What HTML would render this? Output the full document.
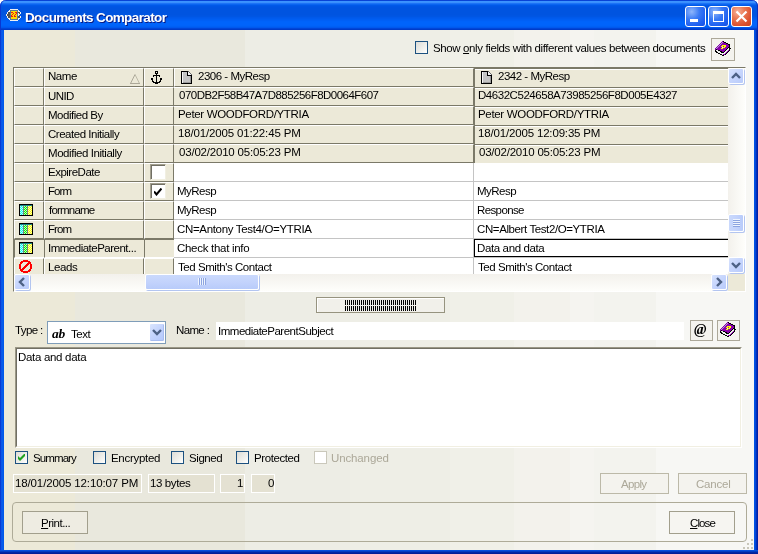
<!DOCTYPE html><html><head><meta charset="utf-8"><style>
html,body{margin:0;padding:0}
body{width:758px;height:554px;position:relative;overflow:hidden;background:#fff;font-family:"Liberation Sans",sans-serif;font-size:11px;color:#000}
div{box-sizing:border-box}
</style></head><body>
<div style="position:absolute;left:0;top:0;width:758px;height:30px;border-radius:6px 6px 0 0;box-shadow:inset 1px 0 0 #0a36d0,inset -1px 0 0 #0a30c0;background:linear-gradient(to bottom,#0843d6 0px,#0843d6 1px,#3b93ff 1px,#3b93ff 2px,#3a8ffc 2px,#3a8ffc 3px,#1c73f6 3px,#1c73f6 4px,#0a64f0 4px,#0a64f0 5px,#0059e8 5px,#0059e8 6px,#0055e4 6px,#0055e4 7px,#0054e2 7px,#0054e2 8px,#0054e0 8px,#0054e0 9px,#0054e0 9px,#0054e0 10px,#0054e0 10px,#0054e0 11px,#0054e0 11px,#0054e0 12px,#0054e0 12px,#0054e0 13px,#0054e0 13px,#0054e0 14px,#0054e0 14px,#0054e0 15px,#0055e2 15px,#0055e2 16px,#0056e4 16px,#0056e4 17px,#0059ea 17px,#0059ea 18px,#005bee 18px,#005bee 19px,#005ef2 19px,#005ef2 20px,#0060f6 20px,#0060f6 21px,#0063fa 21px,#0063fa 22px,#0064fb 22px,#0064fb 23px,#0064fb 23px,#0064fb 24px,#0064fb 24px,#0064fb 25px,#0063fa 25px,#0063fa 26px,#0060f4 26px,#0060f4 27px,#0058ee 27px,#0058ee 28px,#0046d8 28px,#0046d8 29px,#003bc8 29px,#003bc8 30px)"></div>
<div style="position:absolute;left:0;top:30px;width:4px;height:524px;background:linear-gradient(to right,#0526c8 0px,#0a4fe0 1px,#0a5ded 2px,#0058ea 3px)"></div>
<div style="position:absolute;left:754px;top:30px;width:4px;height:524px;background:linear-gradient(to right,#0055e8 0px,#0050e0 1px,#0440d0 2px,#0021a8 3px)"></div>
<div style="position:absolute;left:0;top:550px;width:758px;height:4px;background:linear-gradient(to bottom,#0756e4 0px,#0148d4 1px,#0030b0 2px,#001e98 3px)"></div>
<div style="position:absolute;left:4px;top:30px;width:750px;height:520px;background:linear-gradient(to right,#ece9d8 0px,#ece9d8 71px,#e9e8dd 71px,#e9e8dd 241px,#edede5 241px,#edede5 346px,#eeeee6 346px,#eeeee6 446px,#f0f0e8 446px,#f0f0e8 510px,#f3f2ec 510px,#f3f2ec 566px,#f5f4f0 566px,#f5f4f0 590px,#f3f3ee 590px,#f3f3ee 652px,#f7f7f4 652px,#f7f7f4 750px)"></div>
<svg style="position:absolute;left:6px;top:9px;" width="15" height="12" shape-rendering="crispEdges"><rect x="4" y="0" width="8" height="1" fill="#f0f0f0"/><rect x="3" y="1" width="1" height="1" fill="#f0f0f0"/><rect x="4" y="1" width="8" height="1" fill="#5a7890"/><rect x="12" y="1" width="1" height="1" fill="#f0f0f0"/><rect x="2" y="2" width="2" height="1" fill="#f0f0f0"/><rect x="4" y="2" width="1" height="1" fill="#5a7890"/><rect x="5" y="2" width="6" height="1" fill="#ffd800"/><rect x="11" y="2" width="1" height="1" fill="#5a7890"/><rect x="12" y="2" width="2" height="1" fill="#f0f0f0"/><rect x="1" y="3" width="1" height="1" fill="#f0f0f0"/><rect x="2" y="3" width="2" height="1" fill="#505050"/><rect x="4" y="3" width="1" height="1" fill="#5a7890"/><rect x="5" y="3" width="2" height="1" fill="#e81818"/><rect x="7" y="3" width="2" height="1" fill="#ffd800"/><rect x="9" y="3" width="2" height="1" fill="#e81818"/><rect x="11" y="3" width="1" height="1" fill="#5a7890"/><rect x="12" y="3" width="2" height="1" fill="#505050"/><rect x="14" y="3" width="1" height="1" fill="#f0f0f0"/><rect x="1" y="4" width="1" height="1" fill="#f0f0f0"/><rect x="2" y="4" width="2" height="1" fill="#505050"/><rect x="4" y="4" width="1" height="1" fill="#5a7890"/><rect x="5" y="4" width="2" height="1" fill="#ffd800"/><rect x="7" y="4" width="1" height="1" fill="#e81818"/><rect x="8" y="4" width="2" height="1" fill="#ffd800"/><rect x="10" y="4" width="1" height="1" fill="#e81818"/><rect x="11" y="4" width="1" height="1" fill="#5a7890"/><rect x="12" y="4" width="1" height="1" fill="#f0f0f0"/><rect x="13" y="4" width="1" height="1" fill="#505050"/><rect x="14" y="4" width="1" height="1" fill="#f0f0f0"/><rect x="0" y="5" width="1" height="1" fill="#f0f0f0"/><rect x="1" y="5" width="3" height="1" fill="#505050"/><rect x="4" y="5" width="1" height="1" fill="#5a7890"/><rect x="5" y="5" width="1" height="1" fill="#ffd800"/><rect x="6" y="5" width="1" height="1" fill="#e81818"/><rect x="7" y="5" width="2" height="1" fill="#ffd800"/><rect x="9" y="5" width="1" height="1" fill="#e81818"/><rect x="10" y="5" width="1" height="1" fill="#ffd800"/><rect x="11" y="5" width="1" height="1" fill="#5a7890"/><rect x="12" y="5" width="2" height="1" fill="#f0f0f0"/><rect x="0" y="6" width="1" height="1" fill="#f0f0f0"/><rect x="1" y="6" width="3" height="1" fill="#505050"/><rect x="4" y="6" width="1" height="1" fill="#5a7890"/><rect x="5" y="6" width="1" height="1" fill="#e81818"/><rect x="6" y="6" width="2" height="1" fill="#ffd800"/><rect x="8" y="6" width="1" height="1" fill="#e81818"/><rect x="9" y="6" width="2" height="1" fill="#ffd800"/><rect x="11" y="6" width="1" height="1" fill="#5a7890"/><rect x="12" y="6" width="1" height="1" fill="#f0f0f0"/><rect x="1" y="7" width="1" height="1" fill="#f0f0f0"/><rect x="2" y="7" width="2" height="1" fill="#505050"/><rect x="4" y="7" width="1" height="1" fill="#5a7890"/><rect x="5" y="7" width="2" height="1" fill="#e81818"/><rect x="7" y="7" width="1" height="1" fill="#ffd800"/><rect x="8" y="7" width="2" height="1" fill="#e81818"/><rect x="10" y="7" width="1" height="1" fill="#ffd800"/><rect x="11" y="7" width="1" height="1" fill="#5a7890"/><rect x="12" y="7" width="2" height="1" fill="#505050"/><rect x="14" y="7" width="1" height="1" fill="#f0f0f0"/><rect x="1" y="8" width="1" height="1" fill="#f0f0f0"/><rect x="2" y="8" width="2" height="1" fill="#505050"/><rect x="4" y="8" width="1" height="1" fill="#5a7890"/><rect x="5" y="8" width="6" height="1" fill="#ffd800"/><rect x="11" y="8" width="1" height="1" fill="#5a7890"/><rect x="12" y="8" width="2" height="1" fill="#505050"/><rect x="14" y="8" width="1" height="1" fill="#f0f0f0"/><rect x="2" y="9" width="2" height="1" fill="#f0f0f0"/><rect x="4" y="9" width="1" height="1" fill="#5a7890"/><rect x="5" y="9" width="6" height="1" fill="#ffd800"/><rect x="11" y="9" width="1" height="1" fill="#5a7890"/><rect x="12" y="9" width="2" height="1" fill="#f0f0f0"/><rect x="3" y="10" width="1" height="1" fill="#f0f0f0"/><rect x="4" y="10" width="8" height="1" fill="#5a7890"/><rect x="12" y="10" width="1" height="1" fill="#f0f0f0"/><rect x="4" y="11" width="8" height="1" fill="#f0f0f0"/></svg>
<div style="position:absolute;left:25.20px;top:10px;line-height:16px;font-size:13.5px;letter-spacing:-0.626px;white-space:nowrap;will-change:transform;font-weight:bold;color:#fff;text-shadow:1px 1px 0 #0a1a80">Documents Comparator</div>
<div style="position:absolute;left:685px;top:6px;width:21px;height:21px;border:1px solid #fff;border-radius:3px;background:radial-gradient(circle at 30% 25%,#8fb6fb 0%,#3a7af5 40%,#1d5ef0 75%,#1650e0 100%)"></div>
<div style="position:absolute;left:708px;top:6px;width:21px;height:21px;border:1px solid #fff;border-radius:3px;background:radial-gradient(circle at 30% 25%,#8fb6fb 0%,#3a7af5 40%,#1d5ef0 75%,#1650e0 100%)"></div>
<div style="position:absolute;left:731px;top:6px;width:21px;height:21px;border:1px solid #fff;border-radius:3px;background:radial-gradient(circle at 30% 25%,#f7b29a 0%,#ea7a55 35%,#dd5230 70%,#c8441f 100%)"></div>
<div style="position:absolute;left:690px;top:19px;width:8px;height:3px;background:#fff"></div>
<div style="position:absolute;left:713px;top:11px;width:11px;height:11px;border:1px solid #fff;border-top-width:3px"></div>
<svg style="position:absolute;left:735px;top:10px" width="13" height="13" viewBox="0 0 13 13"><path d="M1.5 1.5L11.5 11.5M11.5 1.5L1.5 11.5" stroke="#fff" stroke-width="2.2"/></svg>
<div style="position:absolute;left:415px;top:41px;width:13px;height:13px;border:1px solid #1c5180;background:linear-gradient(135deg,#dcdcd7 0%,#f0f0ec 60%,#ffffff 100%)"></div>
<div style="position:absolute;left:432.70px;top:42px;line-height:13px;font-size:11.5px;letter-spacing:-0.385px;white-space:nowrap;will-change:transform;;">Show <u>o</u>nly fields with different values between documents</div>
<div style="position:absolute;left:711px;top:38px;width:24px;height:23px;border:1px solid #aca899;background:#f4f3ee"></div>
<svg style="position:absolute;left:715px;top:41px;" width="16" height="15" shape-rendering="crispEdges"><rect x="7" y="0" width="1" height="1" fill="#8a00aa"/><rect x="8" y="0" width="1" height="1" fill="#000"/><rect x="6" y="1" width="1" height="1" fill="#8a00aa"/><rect x="7" y="1" width="1" height="1" fill="#b0a0d8"/><rect x="8" y="1" width="1" height="1" fill="#8a00aa"/><rect x="9" y="1" width="2" height="1" fill="#000"/><rect x="5" y="2" width="1" height="1" fill="#8a00aa"/><rect x="6" y="2" width="1" height="1" fill="#b0a0d8"/><rect x="7" y="2" width="4" height="1" fill="#8a00aa"/><rect x="11" y="2" width="2" height="1" fill="#000"/><rect x="4" y="3" width="1" height="1" fill="#8a00aa"/><rect x="5" y="3" width="1" height="1" fill="#b0a0d8"/><rect x="6" y="3" width="7" height="1" fill="#8a00aa"/><rect x="13" y="3" width="2" height="1" fill="#000"/><rect x="3" y="4" width="1" height="1" fill="#8a00aa"/><rect x="4" y="4" width="1" height="1" fill="#b0a0d8"/><rect x="5" y="4" width="2" height="1" fill="#8a00aa"/><rect x="7" y="4" width="4" height="1" fill="#ffff00"/><rect x="11" y="4" width="3" height="1" fill="#8a00aa"/><rect x="14" y="4" width="1" height="1" fill="#000"/><rect x="2" y="5" width="1" height="1" fill="#8a00aa"/><rect x="3" y="5" width="1" height="1" fill="#b0a0d8"/><rect x="4" y="5" width="2" height="1" fill="#8a00aa"/><rect x="6" y="5" width="2" height="1" fill="#ffff00"/><rect x="8" y="5" width="1" height="1" fill="#8a00aa"/><rect x="9" y="5" width="2" height="1" fill="#ffff00"/><rect x="11" y="5" width="3" height="1" fill="#8a00aa"/><rect x="14" y="5" width="1" height="1" fill="#000"/><rect x="1" y="6" width="1" height="1" fill="#8a00aa"/><rect x="2" y="6" width="1" height="1" fill="#b0a0d8"/><rect x="3" y="6" width="4" height="1" fill="#8a00aa"/><rect x="7" y="6" width="1" height="1" fill="#f0f0f0"/><rect x="8" y="6" width="2" height="1" fill="#ffff00"/><rect x="10" y="6" width="3" height="1" fill="#8a00aa"/><rect x="13" y="6" width="2" height="1" fill="#000"/><rect x="0" y="7" width="1" height="1" fill="#8a00aa"/><rect x="1" y="7" width="1" height="1" fill="#b0a0d8"/><rect x="2" y="7" width="4" height="1" fill="#8a00aa"/><rect x="6" y="7" width="2" height="1" fill="#ffff00"/><rect x="8" y="7" width="4" height="1" fill="#8a00aa"/><rect x="12" y="7" width="1" height="1" fill="#000"/><rect x="13" y="7" width="1" height="1" fill="#f0f0f0"/><rect x="14" y="7" width="2" height="1" fill="#000"/><rect x="0" y="8" width="1" height="1" fill="#8a00aa"/><rect x="1" y="8" width="1" height="1" fill="#000"/><rect x="2" y="8" width="9" height="1" fill="#8a00aa"/><rect x="11" y="8" width="1" height="1" fill="#000"/><rect x="12" y="8" width="2" height="1" fill="#f0f0f0"/><rect x="14" y="8" width="1" height="1" fill="#000"/><rect x="0" y="9" width="1" height="1" fill="#000"/><rect x="1" y="9" width="2" height="1" fill="#f0f0f0"/><rect x="3" y="9" width="2" height="1" fill="#000"/><rect x="5" y="9" width="5" height="1" fill="#8a00aa"/><rect x="10" y="9" width="1" height="1" fill="#000"/><rect x="11" y="9" width="2" height="1" fill="#f0f0f0"/><rect x="13" y="9" width="1" height="1" fill="#8a00aa"/><rect x="14" y="9" width="1" height="1" fill="#000"/><rect x="0" y="10" width="2" height="1" fill="#000"/><rect x="2" y="10" width="3" height="1" fill="#f0f0f0"/><rect x="5" y="10" width="2" height="1" fill="#000"/><rect x="7" y="10" width="2" height="1" fill="#8a00aa"/><rect x="9" y="10" width="1" height="1" fill="#000"/><rect x="10" y="10" width="2" height="1" fill="#f0f0f0"/><rect x="12" y="10" width="1" height="1" fill="#8a00aa"/><rect x="13" y="10" width="1" height="1" fill="#000"/><rect x="1" y="11" width="2" height="1" fill="#000"/><rect x="3" y="11" width="3" height="1" fill="#f0f0f0"/><rect x="6" y="11" width="3" height="1" fill="#000"/><rect x="9" y="11" width="2" height="1" fill="#f0f0f0"/><rect x="11" y="11" width="1" height="1" fill="#8a00aa"/><rect x="12" y="11" width="1" height="1" fill="#000"/><rect x="3" y="12" width="2" height="1" fill="#000"/><rect x="5" y="12" width="5" height="1" fill="#f0f0f0"/><rect x="10" y="12" width="1" height="1" fill="#8a00aa"/><rect x="11" y="12" width="1" height="1" fill="#000"/><rect x="5" y="13" width="2" height="1" fill="#000"/><rect x="7" y="13" width="1" height="1" fill="#f0f0f0"/><rect x="8" y="13" width="2" height="1" fill="#8a00aa"/><rect x="10" y="13" width="1" height="1" fill="#000"/><rect x="7" y="14" width="2" height="1" fill="#000"/></svg>
<div style="position:absolute;left:13px;top:67px;width:733px;height:225px;border-top:1px solid #7b7968;border-left:1px solid #7b7968;border-right:1px solid #fff;border-bottom:1px solid #fff;background:#ece9d8"></div>
<div style="position:absolute;left:14px;top:68px;width:30px;height:19px;background:#ece9d8;border-top:1px solid #fff;border-left:1px solid #fff;border-right:1px solid #7b7968;border-bottom:1px solid #7b7968"></div>
<div style="position:absolute;left:44px;top:68px;width:100px;height:19px;background:#ece9d8;border-top:1px solid #fff;border-left:1px solid #fff;border-right:1px solid #7b7968;border-bottom:1px solid #7b7968"></div>
<div style="position:absolute;left:144px;top:68px;width:30px;height:19px;background:#ece9d8;border-top:1px solid #fff;border-left:1px solid #fff;border-right:1px solid #7b7968;border-bottom:1px solid #7b7968"></div>
<div style="position:absolute;left:14px;top:87px;width:30px;height:19px;background:#ece9d8;border-top:1px solid #fff;border-left:1px solid #fff;border-right:1px solid #7b7968;border-bottom:1px solid #7b7968"></div>
<div style="position:absolute;left:44px;top:87px;width:100px;height:19px;background:#ece9d8;border-top:1px solid #fff;border-left:1px solid #fff;border-right:1px solid #7b7968;border-bottom:1px solid #7b7968"></div>
<div style="position:absolute;left:144px;top:87px;width:30px;height:19px;background:#ece9d8;border-top:1px solid #fff;border-left:1px solid #fff;border-right:1px solid #7b7968;border-bottom:1px solid #7b7968"></div>
<div style="position:absolute;left:14px;top:106px;width:30px;height:19px;background:#ece9d8;border-top:1px solid #fff;border-left:1px solid #fff;border-right:1px solid #7b7968;border-bottom:1px solid #7b7968"></div>
<div style="position:absolute;left:44px;top:106px;width:100px;height:19px;background:#ece9d8;border-top:1px solid #fff;border-left:1px solid #fff;border-right:1px solid #7b7968;border-bottom:1px solid #7b7968"></div>
<div style="position:absolute;left:144px;top:106px;width:30px;height:19px;background:#ece9d8;border-top:1px solid #fff;border-left:1px solid #fff;border-right:1px solid #7b7968;border-bottom:1px solid #7b7968"></div>
<div style="position:absolute;left:14px;top:125px;width:30px;height:19px;background:#ece9d8;border-top:1px solid #fff;border-left:1px solid #fff;border-right:1px solid #7b7968;border-bottom:1px solid #7b7968"></div>
<div style="position:absolute;left:44px;top:125px;width:100px;height:19px;background:#ece9d8;border-top:1px solid #fff;border-left:1px solid #fff;border-right:1px solid #7b7968;border-bottom:1px solid #7b7968"></div>
<div style="position:absolute;left:144px;top:125px;width:30px;height:19px;background:#ece9d8;border-top:1px solid #fff;border-left:1px solid #fff;border-right:1px solid #7b7968;border-bottom:1px solid #7b7968"></div>
<div style="position:absolute;left:14px;top:144px;width:30px;height:19px;background:#ece9d8;border-top:1px solid #fff;border-left:1px solid #fff;border-right:1px solid #7b7968;border-bottom:1px solid #7b7968"></div>
<div style="position:absolute;left:44px;top:144px;width:100px;height:19px;background:#ece9d8;border-top:1px solid #fff;border-left:1px solid #fff;border-right:1px solid #7b7968;border-bottom:1px solid #7b7968"></div>
<div style="position:absolute;left:144px;top:144px;width:30px;height:19px;background:#ece9d8;border-top:1px solid #fff;border-left:1px solid #fff;border-right:1px solid #7b7968;border-bottom:1px solid #7b7968"></div>
<div style="position:absolute;left:14px;top:163px;width:30px;height:19px;background:#ece9d8;border-top:1px solid #fff;border-left:1px solid #fff;border-right:1px solid #7b7968;border-bottom:1px solid #7b7968"></div>
<div style="position:absolute;left:44px;top:163px;width:100px;height:19px;background:#ece9d8;border-top:1px solid #fff;border-left:1px solid #fff;border-right:1px solid #7b7968;border-bottom:1px solid #7b7968"></div>
<div style="position:absolute;left:144px;top:163px;width:30px;height:19px;background:#ece9d8;border-top:1px solid #fff;border-left:1px solid #fff;border-right:1px solid #7b7968;border-bottom:1px solid #7b7968"></div>
<div style="position:absolute;left:14px;top:182px;width:30px;height:19px;background:#ece9d8;border-top:1px solid #fff;border-left:1px solid #fff;border-right:1px solid #7b7968;border-bottom:1px solid #7b7968"></div>
<div style="position:absolute;left:44px;top:182px;width:100px;height:19px;background:#ece9d8;border-top:1px solid #fff;border-left:1px solid #fff;border-right:1px solid #7b7968;border-bottom:1px solid #7b7968"></div>
<div style="position:absolute;left:144px;top:182px;width:30px;height:19px;background:#ece9d8;border-top:1px solid #fff;border-left:1px solid #fff;border-right:1px solid #7b7968;border-bottom:1px solid #7b7968"></div>
<div style="position:absolute;left:14px;top:201px;width:30px;height:19px;background:#ece9d8;border-top:1px solid #fff;border-left:1px solid #fff;border-right:1px solid #7b7968;border-bottom:1px solid #7b7968"></div>
<div style="position:absolute;left:44px;top:201px;width:100px;height:19px;background:#ece9d8;border-top:1px solid #fff;border-left:1px solid #fff;border-right:1px solid #7b7968;border-bottom:1px solid #7b7968"></div>
<div style="position:absolute;left:144px;top:201px;width:30px;height:19px;background:#ece9d8;border-top:1px solid #fff;border-left:1px solid #fff;border-right:1px solid #7b7968;border-bottom:1px solid #7b7968"></div>
<div style="position:absolute;left:14px;top:220px;width:30px;height:19px;background:#ece9d8;border-top:1px solid #fff;border-left:1px solid #fff;border-right:1px solid #7b7968;border-bottom:1px solid #7b7968"></div>
<div style="position:absolute;left:44px;top:220px;width:100px;height:19px;background:#ece9d8;border-top:1px solid #fff;border-left:1px solid #fff;border-right:1px solid #7b7968;border-bottom:1px solid #7b7968"></div>
<div style="position:absolute;left:144px;top:220px;width:30px;height:19px;background:#ece9d8;border-top:1px solid #fff;border-left:1px solid #fff;border-right:1px solid #7b7968;border-bottom:1px solid #7b7968"></div>
<div style="position:absolute;left:14px;top:239px;width:30px;height:19px;background:#ece9d8;border-top:1px solid #7b7968;border-left:1px solid #7b7968;border-bottom:1px solid #fff"></div>
<div style="position:absolute;left:44px;top:239px;width:100px;height:19px;background:#ece9d8;border-top:1px solid #7b7968;border-left:1px solid #7b7968;border-bottom:1px solid #fff"></div>
<div style="position:absolute;left:144px;top:239px;width:30px;height:19px;background:#ece9d8;border-top:1px solid #7b7968;border-left:1px solid #7b7968;border-bottom:1px solid #fff"></div>
<div style="position:absolute;left:14px;top:258px;width:30px;height:16px;background:#ece9d8;border-top:1px solid #fff;border-left:1px solid #fff;border-right:1px solid #7b7968;border-bottom:0"></div>
<div style="position:absolute;left:44px;top:258px;width:100px;height:16px;background:#ece9d8;border-top:1px solid #fff;border-left:1px solid #fff;border-right:1px solid #7b7968;border-bottom:0"></div>
<div style="position:absolute;left:144px;top:258px;width:30px;height:16px;background:#ece9d8;border-top:1px solid #fff;border-left:1px solid #fff;border-right:1px solid #7b7968;border-bottom:0"></div>
<div style="position:absolute;left:174px;top:68px;width:300px;height:19px;background:#ece9d8;border-top:1px solid #fff;border-left:1px solid #fff;border-right:1px solid #7b7968;border-bottom:1px solid #7b7968"></div>
<div style="position:absolute;left:474px;top:68px;width:254px;height:20px;background:#ece9d8;border-top:1px solid #7b7968;border-left:1px solid #7b7968;"><div style="position:absolute;left:0;top:0;right:0;height:1px;background:#fff"></div></div>
<div style="position:absolute;left:174px;top:87px;width:300px;height:19px;background:#ece9d8;border-top:1px solid #fff;border-right:1px solid #7b7968;border-bottom:1px solid #7b7968"></div>
<div style="position:absolute;left:474px;top:87px;width:254px;height:19px;background:#ece9d8;border-top:1px solid #7b7968;border-left:1px solid #7b7968"><div style="position:absolute;left:0;top:0;right:0;height:1px;background:#fff"></div></div>
<div style="position:absolute;left:174px;top:106px;width:300px;height:19px;background:#ece9d8;border-top:1px solid #fff;border-right:1px solid #7b7968;border-bottom:1px solid #7b7968"></div>
<div style="position:absolute;left:474px;top:106px;width:254px;height:19px;background:#ece9d8;border-top:1px solid #7b7968;border-left:1px solid #7b7968"><div style="position:absolute;left:0;top:0;right:0;height:1px;background:#fff"></div></div>
<div style="position:absolute;left:174px;top:125px;width:300px;height:19px;background:#ece9d8;border-top:1px solid #fff;border-right:1px solid #7b7968;border-bottom:1px solid #7b7968"></div>
<div style="position:absolute;left:474px;top:125px;width:254px;height:19px;background:#ece9d8;border-top:1px solid #7b7968;border-left:1px solid #7b7968"><div style="position:absolute;left:0;top:0;right:0;height:1px;background:#fff"></div></div>
<div style="position:absolute;left:174px;top:144px;width:300px;height:19px;background:#ece9d8;border-top:1px solid #fff;border-right:1px solid #7b7968;border-bottom:1px solid #7b7968"></div>
<div style="position:absolute;left:474px;top:144px;width:254px;height:19px;background:#ece9d8;border-top:1px solid #7b7968;border-left:1px solid #7b7968"><div style="position:absolute;left:0;top:0;right:0;height:1px;background:#fff"></div></div>
<div style="position:absolute;left:174px;top:163px;width:300px;height:19px;background:#fff;border-right:1px solid #c4c4c4;border-bottom:1px solid #c4c4c4"></div>
<div style="position:absolute;left:474px;top:163px;width:254px;height:19px;background:#fff;border-bottom:1px solid #c4c4c4"></div>
<div style="position:absolute;left:174px;top:182px;width:300px;height:19px;background:#fff;border-right:1px solid #c4c4c4;border-bottom:1px solid #c4c4c4"></div>
<div style="position:absolute;left:474px;top:182px;width:254px;height:19px;background:#fff;border-bottom:1px solid #c4c4c4"></div>
<div style="position:absolute;left:174px;top:201px;width:300px;height:19px;background:#fff;border-right:1px solid #c4c4c4;border-bottom:1px solid #c4c4c4"></div>
<div style="position:absolute;left:474px;top:201px;width:254px;height:19px;background:#fff;border-bottom:1px solid #c4c4c4"></div>
<div style="position:absolute;left:174px;top:220px;width:300px;height:19px;background:#fff;border-right:1px solid #c4c4c4;border-bottom:1px solid #c4c4c4"></div>
<div style="position:absolute;left:474px;top:220px;width:254px;height:19px;background:#fff;border-bottom:1px solid #c4c4c4"></div>
<div style="position:absolute;left:174px;top:239px;width:300px;height:19px;background:#fff;border-right:1px solid #c4c4c4;border-bottom:1px solid #c4c4c4"></div>
<div style="position:absolute;left:474px;top:239px;width:254px;height:19px;background:#fff;border-bottom:1px solid #c4c4c4"></div>
<div style="position:absolute;left:174px;top:258px;width:300px;height:16px;background:#fff;border-right:1px solid #c4c4c4;border-bottom:0"></div>
<div style="position:absolute;left:474px;top:258px;width:254px;height:16px;background:#fff;border-bottom:0"></div>
<div style="position:absolute;left:474px;top:239px;width:254px;height:18px;border:1px solid #000;border-right:0"></div>
<div style="position:absolute;left:47.50px;top:70px;line-height:13px;font-size:11.5px;letter-spacing:-0.467px;white-space:nowrap;will-change:transform;;">Name</div>
<svg style="position:absolute;left:129px;top:73px" width="13" height="12"><path d="M1.5 10.5 L6 1.5" stroke="#aca899" fill="none"/><path d="M6 1.5 L10.5 10.5" stroke="#bdbaa9" fill="none"/><path d="M1 10.5 H11" stroke="#aca899" fill="none"/></svg>
<svg style="position:absolute;left:151px;top:71px;" width="11" height="13" shape-rendering="crispEdges"><rect x="4" y="0" width="3" height="1" fill="#000"/><rect x="4" y="1" width="1" height="1" fill="#000"/><rect x="6" y="1" width="1" height="1" fill="#000"/><rect x="4" y="2" width="3" height="1" fill="#000"/><rect x="5" y="3" width="1" height="1" fill="#000"/><rect x="2" y="4" width="7" height="1" fill="#000"/><rect x="2" y="5" width="1" height="1" fill="#000"/><rect x="5" y="5" width="1" height="1" fill="#000"/><rect x="8" y="5" width="1" height="1" fill="#000"/><rect x="5" y="6" width="1" height="1" fill="#000"/><rect x="0" y="7" width="2" height="1" fill="#000"/><rect x="5" y="7" width="1" height="1" fill="#000"/><rect x="9" y="7" width="2" height="1" fill="#000"/><rect x="0" y="8" width="2" height="1" fill="#000"/><rect x="5" y="8" width="1" height="1" fill="#000"/><rect x="9" y="8" width="2" height="1" fill="#000"/><rect x="1" y="9" width="1" height="1" fill="#000"/><rect x="5" y="9" width="1" height="1" fill="#000"/><rect x="9" y="9" width="1" height="1" fill="#000"/><rect x="1" y="10" width="2" height="1" fill="#000"/><rect x="5" y="10" width="1" height="1" fill="#000"/><rect x="8" y="10" width="2" height="1" fill="#000"/><rect x="2" y="11" width="7" height="1" fill="#000"/><rect x="4" y="12" width="3" height="1" fill="#000"/></svg>
<svg style="position:absolute;left:181px;top:71px;" width="11" height="13" shape-rendering="crispEdges"><rect x="0" y="0" width="7" height="1" fill="#000"/><rect x="7" y="0" width="1" height="1" fill="#6a6a6a"/><rect x="0" y="1" width="1" height="1" fill="#000"/><rect x="1" y="1" width="1" height="1" fill="#f4f4f4"/><rect x="2" y="1" width="4" height="1" fill="#c4c4c4"/><rect x="6" y="1" width="1" height="1" fill="#000"/><rect x="7" y="1" width="1" height="1" fill="#f4f4f4"/><rect x="8" y="1" width="1" height="1" fill="#6a6a6a"/><rect x="0" y="2" width="1" height="1" fill="#000"/><rect x="1" y="2" width="1" height="1" fill="#f4f4f4"/><rect x="2" y="2" width="4" height="1" fill="#c4c4c4"/><rect x="6" y="2" width="1" height="1" fill="#000"/><rect x="7" y="2" width="2" height="1" fill="#f4f4f4"/><rect x="9" y="2" width="1" height="1" fill="#6a6a6a"/><rect x="0" y="3" width="1" height="1" fill="#000"/><rect x="1" y="3" width="1" height="1" fill="#f4f4f4"/><rect x="2" y="3" width="4" height="1" fill="#c4c4c4"/><rect x="6" y="3" width="1" height="1" fill="#000"/><rect x="7" y="3" width="3" height="1" fill="#f4f4f4"/><rect x="10" y="3" width="1" height="1" fill="#6a6a6a"/><rect x="0" y="4" width="1" height="1" fill="#000"/><rect x="1" y="4" width="1" height="1" fill="#f4f4f4"/><rect x="2" y="4" width="4" height="1" fill="#c4c4c4"/><rect x="6" y="4" width="5" height="1" fill="#000"/><rect x="0" y="5" width="1" height="1" fill="#000"/><rect x="1" y="5" width="1" height="1" fill="#f4f4f4"/><rect x="2" y="5" width="7" height="1" fill="#c4c4c4"/><rect x="9" y="5" width="1" height="1" fill="#9c9c9c"/><rect x="10" y="5" width="1" height="1" fill="#000"/><rect x="0" y="6" width="1" height="1" fill="#000"/><rect x="1" y="6" width="1" height="1" fill="#f4f4f4"/><rect x="2" y="6" width="7" height="1" fill="#c4c4c4"/><rect x="9" y="6" width="1" height="1" fill="#9c9c9c"/><rect x="10" y="6" width="1" height="1" fill="#000"/><rect x="0" y="7" width="1" height="1" fill="#000"/><rect x="1" y="7" width="1" height="1" fill="#f4f4f4"/><rect x="2" y="7" width="7" height="1" fill="#c4c4c4"/><rect x="9" y="7" width="1" height="1" fill="#9c9c9c"/><rect x="10" y="7" width="1" height="1" fill="#000"/><rect x="0" y="8" width="1" height="1" fill="#000"/><rect x="1" y="8" width="1" height="1" fill="#f4f4f4"/><rect x="2" y="8" width="7" height="1" fill="#c4c4c4"/><rect x="9" y="8" width="1" height="1" fill="#9c9c9c"/><rect x="10" y="8" width="1" height="1" fill="#000"/><rect x="0" y="9" width="1" height="1" fill="#000"/><rect x="1" y="9" width="1" height="1" fill="#f4f4f4"/><rect x="2" y="9" width="7" height="1" fill="#c4c4c4"/><rect x="9" y="9" width="1" height="1" fill="#9c9c9c"/><rect x="10" y="9" width="1" height="1" fill="#000"/><rect x="0" y="10" width="1" height="1" fill="#000"/><rect x="1" y="10" width="1" height="1" fill="#f4f4f4"/><rect x="2" y="10" width="7" height="1" fill="#c4c4c4"/><rect x="9" y="10" width="1" height="1" fill="#9c9c9c"/><rect x="10" y="10" width="1" height="1" fill="#000"/><rect x="0" y="11" width="1" height="1" fill="#000"/><rect x="1" y="11" width="1" height="1" fill="#f4f4f4"/><rect x="2" y="11" width="8" height="1" fill="#9c9c9c"/><rect x="10" y="11" width="1" height="1" fill="#000"/><rect x="0" y="12" width="11" height="1" fill="#000"/></svg>
<div style="position:absolute;left:198.00px;top:70px;line-height:13px;font-size:11.5px;letter-spacing:-0.483px;white-space:nowrap;will-change:transform;;">2306 - MyResp</div>
<svg style="position:absolute;left:481px;top:71px;" width="11" height="13" shape-rendering="crispEdges"><rect x="0" y="0" width="7" height="1" fill="#000"/><rect x="7" y="0" width="1" height="1" fill="#6a6a6a"/><rect x="0" y="1" width="1" height="1" fill="#000"/><rect x="1" y="1" width="1" height="1" fill="#f4f4f4"/><rect x="2" y="1" width="4" height="1" fill="#c4c4c4"/><rect x="6" y="1" width="1" height="1" fill="#000"/><rect x="7" y="1" width="1" height="1" fill="#f4f4f4"/><rect x="8" y="1" width="1" height="1" fill="#6a6a6a"/><rect x="0" y="2" width="1" height="1" fill="#000"/><rect x="1" y="2" width="1" height="1" fill="#f4f4f4"/><rect x="2" y="2" width="4" height="1" fill="#c4c4c4"/><rect x="6" y="2" width="1" height="1" fill="#000"/><rect x="7" y="2" width="2" height="1" fill="#f4f4f4"/><rect x="9" y="2" width="1" height="1" fill="#6a6a6a"/><rect x="0" y="3" width="1" height="1" fill="#000"/><rect x="1" y="3" width="1" height="1" fill="#f4f4f4"/><rect x="2" y="3" width="4" height="1" fill="#c4c4c4"/><rect x="6" y="3" width="1" height="1" fill="#000"/><rect x="7" y="3" width="3" height="1" fill="#f4f4f4"/><rect x="10" y="3" width="1" height="1" fill="#6a6a6a"/><rect x="0" y="4" width="1" height="1" fill="#000"/><rect x="1" y="4" width="1" height="1" fill="#f4f4f4"/><rect x="2" y="4" width="4" height="1" fill="#c4c4c4"/><rect x="6" y="4" width="5" height="1" fill="#000"/><rect x="0" y="5" width="1" height="1" fill="#000"/><rect x="1" y="5" width="1" height="1" fill="#f4f4f4"/><rect x="2" y="5" width="7" height="1" fill="#c4c4c4"/><rect x="9" y="5" width="1" height="1" fill="#9c9c9c"/><rect x="10" y="5" width="1" height="1" fill="#000"/><rect x="0" y="6" width="1" height="1" fill="#000"/><rect x="1" y="6" width="1" height="1" fill="#f4f4f4"/><rect x="2" y="6" width="7" height="1" fill="#c4c4c4"/><rect x="9" y="6" width="1" height="1" fill="#9c9c9c"/><rect x="10" y="6" width="1" height="1" fill="#000"/><rect x="0" y="7" width="1" height="1" fill="#000"/><rect x="1" y="7" width="1" height="1" fill="#f4f4f4"/><rect x="2" y="7" width="7" height="1" fill="#c4c4c4"/><rect x="9" y="7" width="1" height="1" fill="#9c9c9c"/><rect x="10" y="7" width="1" height="1" fill="#000"/><rect x="0" y="8" width="1" height="1" fill="#000"/><rect x="1" y="8" width="1" height="1" fill="#f4f4f4"/><rect x="2" y="8" width="7" height="1" fill="#c4c4c4"/><rect x="9" y="8" width="1" height="1" fill="#9c9c9c"/><rect x="10" y="8" width="1" height="1" fill="#000"/><rect x="0" y="9" width="1" height="1" fill="#000"/><rect x="1" y="9" width="1" height="1" fill="#f4f4f4"/><rect x="2" y="9" width="7" height="1" fill="#c4c4c4"/><rect x="9" y="9" width="1" height="1" fill="#9c9c9c"/><rect x="10" y="9" width="1" height="1" fill="#000"/><rect x="0" y="10" width="1" height="1" fill="#000"/><rect x="1" y="10" width="1" height="1" fill="#f4f4f4"/><rect x="2" y="10" width="7" height="1" fill="#c4c4c4"/><rect x="9" y="10" width="1" height="1" fill="#9c9c9c"/><rect x="10" y="10" width="1" height="1" fill="#000"/><rect x="0" y="11" width="1" height="1" fill="#000"/><rect x="1" y="11" width="1" height="1" fill="#f4f4f4"/><rect x="2" y="11" width="8" height="1" fill="#9c9c9c"/><rect x="10" y="11" width="1" height="1" fill="#000"/><rect x="0" y="12" width="11" height="1" fill="#000"/></svg>
<div style="position:absolute;left:498.00px;top:70px;line-height:13px;font-size:11.5px;letter-spacing:-0.483px;white-space:nowrap;will-change:transform;;">2342 - MyResp</div>
<div style="position:absolute;left:47.50px;top:90px;line-height:13px;font-size:11.5px;letter-spacing:-0.567px;white-space:nowrap;will-change:transform;;">UNID</div>
<div style="position:absolute;left:179.00px;top:89px;line-height:13px;font-size:11.5px;letter-spacing:-0.519px;white-space:nowrap;will-change:transform;;">070DB2F58B47A7D885256F8D0064F607</div>
<div style="position:absolute;left:477.80px;top:89px;line-height:13px;font-size:11.5px;letter-spacing:-0.455px;white-space:nowrap;will-change:transform;;">D4632C524658A73985256F8D005E4327</div>
<div style="position:absolute;left:47.50px;top:109px;line-height:13px;font-size:11.5px;letter-spacing:-0.480px;white-space:nowrap;will-change:transform;;">Modified By</div>
<div style="position:absolute;left:177.50px;top:108px;line-height:13px;font-size:11.5px;letter-spacing:-0.332px;white-space:nowrap;will-change:transform;;">Peter WOODFORD/YTRIA</div>
<div style="position:absolute;left:477.50px;top:108px;line-height:13px;font-size:11.5px;letter-spacing:-0.321px;white-space:nowrap;will-change:transform;;">Peter WOODFORD/YTRIA</div>
<div style="position:absolute;left:47.50px;top:128px;line-height:13px;font-size:11.5px;letter-spacing:-0.475px;white-space:nowrap;will-change:transform;;">Created Initially</div>
<div style="position:absolute;left:177.70px;top:127px;line-height:13px;font-size:11.5px;letter-spacing:-0.152px;white-space:nowrap;will-change:transform;;">18/01/2005 01:22:45 PM</div>
<div style="position:absolute;left:477.70px;top:127px;line-height:13px;font-size:11.5px;letter-spacing:-0.167px;white-space:nowrap;will-change:transform;;">18/01/2005 12:09:35 PM</div>
<div style="position:absolute;left:47.50px;top:147px;line-height:13px;font-size:11.5px;letter-spacing:-0.441px;white-space:nowrap;will-change:transform;;">Modified Initially</div>
<div style="position:absolute;left:178.70px;top:146px;line-height:13px;font-size:11.5px;letter-spacing:-0.200px;white-space:nowrap;will-change:transform;;">03/02/2010 05:05:23 PM</div>
<div style="position:absolute;left:478.70px;top:146px;line-height:13px;font-size:11.5px;letter-spacing:-0.214px;white-space:nowrap;will-change:transform;;">03/02/2010 05:05:23 PM</div>
<div style="position:absolute;left:47.50px;top:166px;line-height:13px;font-size:11.5px;letter-spacing:-0.500px;white-space:nowrap;will-change:transform;;">ExpireDate</div>
<div style="position:absolute;left:47.50px;top:185px;line-height:13px;font-size:11.5px;letter-spacing:-0.933px;white-space:nowrap;will-change:transform;;">Form</div>
<div style="position:absolute;left:176.80px;top:185px;line-height:13px;font-size:11.5px;letter-spacing:-0.520px;white-space:nowrap;will-change:transform;;">MyResp</div>
<div style="position:absolute;left:476.80px;top:185px;line-height:13px;font-size:11.5px;letter-spacing:-0.520px;white-space:nowrap;will-change:transform;;">MyResp</div>
<div style="position:absolute;left:48.50px;top:204px;line-height:13px;font-size:11.5px;letter-spacing:-0.786px;white-space:nowrap;will-change:transform;;">formname</div>
<div style="position:absolute;left:176.80px;top:204px;line-height:13px;font-size:11.5px;letter-spacing:-0.520px;white-space:nowrap;will-change:transform;;">MyResp</div>
<div style="position:absolute;left:477.30px;top:204px;line-height:13px;font-size:11.5px;letter-spacing:-0.614px;white-space:nowrap;will-change:transform;;">Response</div>
<div style="position:absolute;left:47.50px;top:223px;line-height:13px;font-size:11.5px;letter-spacing:-0.933px;white-space:nowrap;will-change:transform;;">From</div>
<div style="position:absolute;left:177.30px;top:223px;line-height:13px;font-size:11.5px;letter-spacing:-0.336px;white-space:nowrap;will-change:transform;;">CN=Antony Test4/O=YTRIA</div>
<div style="position:absolute;left:477.30px;top:223px;line-height:13px;font-size:11.5px;letter-spacing:-0.395px;white-space:nowrap;will-change:transform;;">CN=Albert Test2/O=YTRIA</div>
<div style="position:absolute;left:47.50px;top:242px;line-height:13px;font-size:11.5px;letter-spacing:-0.500px;white-space:nowrap;will-change:transform;;">ImmediateParent...</div>
<div style="position:absolute;left:177.30px;top:242px;line-height:13px;font-size:11.5px;letter-spacing:-0.293px;white-space:nowrap;will-change:transform;;">Check that info</div>
<div style="position:absolute;left:477.30px;top:242px;line-height:13px;font-size:11.5px;letter-spacing:-0.375px;white-space:nowrap;will-change:transform;;">Data and data</div>
<div style="position:absolute;left:47.50px;top:261px;line-height:13px;font-size:11.5px;letter-spacing:-0.400px;white-space:nowrap;will-change:transform;;">Leads</div>
<div style="position:absolute;left:178.30px;top:261px;line-height:13px;font-size:11.5px;letter-spacing:-0.439px;white-space:nowrap;will-change:transform;;">Ted Smith's Contact</div>
<div style="position:absolute;left:478.30px;top:261px;line-height:13px;font-size:11.5px;letter-spacing:-0.439px;white-space:nowrap;will-change:transform;;">Ted Smith's Contact</div>
<div style="position:absolute;left:150px;top:164px;width:16px;height:16px;background:#fff;border-top:1px solid #a29f8e;border-left:1px solid #a29f8e;border-right:1px solid #f1efe2;border-bottom:1px solid #f1efe2;box-shadow:inset 1px 1px 0 #716f64"></div>
<div style="position:absolute;left:150px;top:183px;width:16px;height:16px;background:#fff;border-top:1px solid #a29f8e;border-left:1px solid #a29f8e;border-right:1px solid #f1efe2;border-bottom:1px solid #f1efe2;box-shadow:inset 1px 1px 0 #716f64"></div>
<svg style="position:absolute;left:154px;top:188px" width="8" height="8" viewBox="0 0 8 8"><path d="M0 3.5 L2.5 6.5 L7.5 0.5" stroke="#000" stroke-width="2" fill="none"/></svg>
<svg style="position:absolute;left:19px;top:204px;" width="14" height="12" shape-rendering="crispEdges"><rect x="0" y="0" width="14" height="1" fill="#000"/><rect x="0" y="1" width="1" height="1" fill="#000"/><rect x="1" y="1" width="12" height="1" fill="#1a8a8a"/><rect x="13" y="1" width="1" height="1" fill="#000"/><rect x="0" y="2" width="1" height="1" fill="#000"/><rect x="1" y="2" width="1" height="1" fill="#c8f4f0"/><rect x="2" y="2" width="1" height="1" fill="#00ffff"/><rect x="3" y="2" width="1" height="1" fill="#c8f4f0"/><rect x="4" y="2" width="1" height="1" fill="#808080"/><rect x="5" y="2" width="1" height="1" fill="#c0f0c0"/><rect x="6" y="2" width="1" height="1" fill="#00ff00"/><rect x="7" y="2" width="1" height="1" fill="#c0f0c0"/><rect x="8" y="2" width="1" height="1" fill="#808080"/><rect x="9" y="2" width="1" height="1" fill="#f4f4c0"/><rect x="10" y="2" width="1" height="1" fill="#ffff00"/><rect x="11" y="2" width="1" height="1" fill="#f4f4c0"/><rect x="12" y="2" width="1" height="1" fill="#ffff00"/><rect x="13" y="2" width="1" height="1" fill="#000"/><rect x="0" y="3" width="1" height="1" fill="#000"/><rect x="1" y="3" width="1" height="1" fill="#00ffff"/><rect x="2" y="3" width="1" height="1" fill="#c8f4f0"/><rect x="3" y="3" width="1" height="1" fill="#00ffff"/><rect x="4" y="3" width="1" height="1" fill="#808080"/><rect x="5" y="3" width="1" height="1" fill="#00ff00"/><rect x="6" y="3" width="1" height="1" fill="#c0f0c0"/><rect x="7" y="3" width="1" height="1" fill="#00ff00"/><rect x="8" y="3" width="1" height="1" fill="#808080"/><rect x="9" y="3" width="1" height="1" fill="#ffff00"/><rect x="10" y="3" width="1" height="1" fill="#f4f4c0"/><rect x="11" y="3" width="1" height="1" fill="#ffff00"/><rect x="12" y="3" width="1" height="1" fill="#f4f4c0"/><rect x="13" y="3" width="1" height="1" fill="#000"/><rect x="0" y="4" width="1" height="1" fill="#000"/><rect x="1" y="4" width="1" height="1" fill="#c8f4f0"/><rect x="2" y="4" width="1" height="1" fill="#00ffff"/><rect x="3" y="4" width="1" height="1" fill="#c8f4f0"/><rect x="4" y="4" width="1" height="1" fill="#808080"/><rect x="5" y="4" width="1" height="1" fill="#c0f0c0"/><rect x="6" y="4" width="1" height="1" fill="#00ff00"/><rect x="7" y="4" width="1" height="1" fill="#c0f0c0"/><rect x="8" y="4" width="1" height="1" fill="#808080"/><rect x="9" y="4" width="1" height="1" fill="#f4f4c0"/><rect x="10" y="4" width="1" height="1" fill="#ffff00"/><rect x="11" y="4" width="1" height="1" fill="#f4f4c0"/><rect x="12" y="4" width="1" height="1" fill="#ffff00"/><rect x="13" y="4" width="1" height="1" fill="#000"/><rect x="0" y="5" width="1" height="1" fill="#000"/><rect x="1" y="5" width="1" height="1" fill="#00ffff"/><rect x="2" y="5" width="1" height="1" fill="#c8f4f0"/><rect x="3" y="5" width="1" height="1" fill="#00ffff"/><rect x="4" y="5" width="1" height="1" fill="#808080"/><rect x="5" y="5" width="1" height="1" fill="#00ff00"/><rect x="6" y="5" width="1" height="1" fill="#c0f0c0"/><rect x="7" y="5" width="1" height="1" fill="#00ff00"/><rect x="8" y="5" width="1" height="1" fill="#808080"/><rect x="9" y="5" width="1" height="1" fill="#ffff00"/><rect x="10" y="5" width="1" height="1" fill="#f4f4c0"/><rect x="11" y="5" width="1" height="1" fill="#ffff00"/><rect x="12" y="5" width="1" height="1" fill="#f4f4c0"/><rect x="13" y="5" width="1" height="1" fill="#000"/><rect x="0" y="6" width="1" height="1" fill="#000"/><rect x="1" y="6" width="1" height="1" fill="#c8f4f0"/><rect x="2" y="6" width="1" height="1" fill="#00ffff"/><rect x="3" y="6" width="1" height="1" fill="#c8f4f0"/><rect x="4" y="6" width="1" height="1" fill="#808080"/><rect x="5" y="6" width="1" height="1" fill="#c0f0c0"/><rect x="6" y="6" width="1" height="1" fill="#00ff00"/><rect x="7" y="6" width="1" height="1" fill="#c0f0c0"/><rect x="8" y="6" width="1" height="1" fill="#808080"/><rect x="9" y="6" width="1" height="1" fill="#f4f4c0"/><rect x="10" y="6" width="1" height="1" fill="#ffff00"/><rect x="11" y="6" width="1" height="1" fill="#f4f4c0"/><rect x="12" y="6" width="1" height="1" fill="#ffff00"/><rect x="13" y="6" width="1" height="1" fill="#000"/><rect x="0" y="7" width="1" height="1" fill="#000"/><rect x="1" y="7" width="1" height="1" fill="#00ffff"/><rect x="2" y="7" width="1" height="1" fill="#c8f4f0"/><rect x="3" y="7" width="1" height="1" fill="#00ffff"/><rect x="4" y="7" width="1" height="1" fill="#808080"/><rect x="5" y="7" width="1" height="1" fill="#00ff00"/><rect x="6" y="7" width="1" height="1" fill="#c0f0c0"/><rect x="7" y="7" width="1" height="1" fill="#00ff00"/><rect x="8" y="7" width="1" height="1" fill="#808080"/><rect x="9" y="7" width="1" height="1" fill="#ffff00"/><rect x="10" y="7" width="1" height="1" fill="#f4f4c0"/><rect x="11" y="7" width="1" height="1" fill="#ffff00"/><rect x="12" y="7" width="1" height="1" fill="#f4f4c0"/><rect x="13" y="7" width="1" height="1" fill="#000"/><rect x="0" y="8" width="1" height="1" fill="#000"/><rect x="1" y="8" width="1" height="1" fill="#c8f4f0"/><rect x="2" y="8" width="1" height="1" fill="#00ffff"/><rect x="3" y="8" width="1" height="1" fill="#c8f4f0"/><rect x="4" y="8" width="1" height="1" fill="#808080"/><rect x="5" y="8" width="1" height="1" fill="#c0f0c0"/><rect x="6" y="8" width="1" height="1" fill="#00ff00"/><rect x="7" y="8" width="1" height="1" fill="#c0f0c0"/><rect x="8" y="8" width="1" height="1" fill="#808080"/><rect x="9" y="8" width="1" height="1" fill="#f4f4c0"/><rect x="10" y="8" width="1" height="1" fill="#ffff00"/><rect x="11" y="8" width="1" height="1" fill="#f4f4c0"/><rect x="12" y="8" width="1" height="1" fill="#ffff00"/><rect x="13" y="8" width="1" height="1" fill="#000"/><rect x="0" y="9" width="1" height="1" fill="#000"/><rect x="1" y="9" width="1" height="1" fill="#00ffff"/><rect x="2" y="9" width="1" height="1" fill="#c8f4f0"/><rect x="3" y="9" width="1" height="1" fill="#00ffff"/><rect x="4" y="9" width="1" height="1" fill="#808080"/><rect x="5" y="9" width="1" height="1" fill="#00ff00"/><rect x="6" y="9" width="1" height="1" fill="#c0f0c0"/><rect x="7" y="9" width="1" height="1" fill="#00ff00"/><rect x="8" y="9" width="1" height="1" fill="#808080"/><rect x="9" y="9" width="1" height="1" fill="#ffff00"/><rect x="10" y="9" width="1" height="1" fill="#f4f4c0"/><rect x="11" y="9" width="1" height="1" fill="#ffff00"/><rect x="12" y="9" width="1" height="1" fill="#f4f4c0"/><rect x="13" y="9" width="1" height="1" fill="#000"/><rect x="0" y="10" width="1" height="1" fill="#000"/><rect x="1" y="10" width="1" height="1" fill="#c8f4f0"/><rect x="2" y="10" width="1" height="1" fill="#00ffff"/><rect x="3" y="10" width="1" height="1" fill="#c8f4f0"/><rect x="4" y="10" width="1" height="1" fill="#808080"/><rect x="5" y="10" width="1" height="1" fill="#c0f0c0"/><rect x="6" y="10" width="1" height="1" fill="#00ff00"/><rect x="7" y="10" width="1" height="1" fill="#c0f0c0"/><rect x="8" y="10" width="1" height="1" fill="#808080"/><rect x="9" y="10" width="1" height="1" fill="#f4f4c0"/><rect x="10" y="10" width="1" height="1" fill="#ffff00"/><rect x="11" y="10" width="1" height="1" fill="#f4f4c0"/><rect x="12" y="10" width="1" height="1" fill="#ffff00"/><rect x="13" y="10" width="1" height="1" fill="#000"/><rect x="0" y="11" width="14" height="1" fill="#000"/></svg>
<svg style="position:absolute;left:19px;top:223px;" width="14" height="12" shape-rendering="crispEdges"><rect x="0" y="0" width="14" height="1" fill="#000"/><rect x="0" y="1" width="1" height="1" fill="#000"/><rect x="1" y="1" width="12" height="1" fill="#1a8a8a"/><rect x="13" y="1" width="1" height="1" fill="#000"/><rect x="0" y="2" width="1" height="1" fill="#000"/><rect x="1" y="2" width="1" height="1" fill="#c8f4f0"/><rect x="2" y="2" width="1" height="1" fill="#00ffff"/><rect x="3" y="2" width="1" height="1" fill="#c8f4f0"/><rect x="4" y="2" width="1" height="1" fill="#808080"/><rect x="5" y="2" width="1" height="1" fill="#c0f0c0"/><rect x="6" y="2" width="1" height="1" fill="#00ff00"/><rect x="7" y="2" width="1" height="1" fill="#c0f0c0"/><rect x="8" y="2" width="1" height="1" fill="#808080"/><rect x="9" y="2" width="1" height="1" fill="#f4f4c0"/><rect x="10" y="2" width="1" height="1" fill="#ffff00"/><rect x="11" y="2" width="1" height="1" fill="#f4f4c0"/><rect x="12" y="2" width="1" height="1" fill="#ffff00"/><rect x="13" y="2" width="1" height="1" fill="#000"/><rect x="0" y="3" width="1" height="1" fill="#000"/><rect x="1" y="3" width="1" height="1" fill="#00ffff"/><rect x="2" y="3" width="1" height="1" fill="#c8f4f0"/><rect x="3" y="3" width="1" height="1" fill="#00ffff"/><rect x="4" y="3" width="1" height="1" fill="#808080"/><rect x="5" y="3" width="1" height="1" fill="#00ff00"/><rect x="6" y="3" width="1" height="1" fill="#c0f0c0"/><rect x="7" y="3" width="1" height="1" fill="#00ff00"/><rect x="8" y="3" width="1" height="1" fill="#808080"/><rect x="9" y="3" width="1" height="1" fill="#ffff00"/><rect x="10" y="3" width="1" height="1" fill="#f4f4c0"/><rect x="11" y="3" width="1" height="1" fill="#ffff00"/><rect x="12" y="3" width="1" height="1" fill="#f4f4c0"/><rect x="13" y="3" width="1" height="1" fill="#000"/><rect x="0" y="4" width="1" height="1" fill="#000"/><rect x="1" y="4" width="1" height="1" fill="#c8f4f0"/><rect x="2" y="4" width="1" height="1" fill="#00ffff"/><rect x="3" y="4" width="1" height="1" fill="#c8f4f0"/><rect x="4" y="4" width="1" height="1" fill="#808080"/><rect x="5" y="4" width="1" height="1" fill="#c0f0c0"/><rect x="6" y="4" width="1" height="1" fill="#00ff00"/><rect x="7" y="4" width="1" height="1" fill="#c0f0c0"/><rect x="8" y="4" width="1" height="1" fill="#808080"/><rect x="9" y="4" width="1" height="1" fill="#f4f4c0"/><rect x="10" y="4" width="1" height="1" fill="#ffff00"/><rect x="11" y="4" width="1" height="1" fill="#f4f4c0"/><rect x="12" y="4" width="1" height="1" fill="#ffff00"/><rect x="13" y="4" width="1" height="1" fill="#000"/><rect x="0" y="5" width="1" height="1" fill="#000"/><rect x="1" y="5" width="1" height="1" fill="#00ffff"/><rect x="2" y="5" width="1" height="1" fill="#c8f4f0"/><rect x="3" y="5" width="1" height="1" fill="#00ffff"/><rect x="4" y="5" width="1" height="1" fill="#808080"/><rect x="5" y="5" width="1" height="1" fill="#00ff00"/><rect x="6" y="5" width="1" height="1" fill="#c0f0c0"/><rect x="7" y="5" width="1" height="1" fill="#00ff00"/><rect x="8" y="5" width="1" height="1" fill="#808080"/><rect x="9" y="5" width="1" height="1" fill="#ffff00"/><rect x="10" y="5" width="1" height="1" fill="#f4f4c0"/><rect x="11" y="5" width="1" height="1" fill="#ffff00"/><rect x="12" y="5" width="1" height="1" fill="#f4f4c0"/><rect x="13" y="5" width="1" height="1" fill="#000"/><rect x="0" y="6" width="1" height="1" fill="#000"/><rect x="1" y="6" width="1" height="1" fill="#c8f4f0"/><rect x="2" y="6" width="1" height="1" fill="#00ffff"/><rect x="3" y="6" width="1" height="1" fill="#c8f4f0"/><rect x="4" y="6" width="1" height="1" fill="#808080"/><rect x="5" y="6" width="1" height="1" fill="#c0f0c0"/><rect x="6" y="6" width="1" height="1" fill="#00ff00"/><rect x="7" y="6" width="1" height="1" fill="#c0f0c0"/><rect x="8" y="6" width="1" height="1" fill="#808080"/><rect x="9" y="6" width="1" height="1" fill="#f4f4c0"/><rect x="10" y="6" width="1" height="1" fill="#ffff00"/><rect x="11" y="6" width="1" height="1" fill="#f4f4c0"/><rect x="12" y="6" width="1" height="1" fill="#ffff00"/><rect x="13" y="6" width="1" height="1" fill="#000"/><rect x="0" y="7" width="1" height="1" fill="#000"/><rect x="1" y="7" width="1" height="1" fill="#00ffff"/><rect x="2" y="7" width="1" height="1" fill="#c8f4f0"/><rect x="3" y="7" width="1" height="1" fill="#00ffff"/><rect x="4" y="7" width="1" height="1" fill="#808080"/><rect x="5" y="7" width="1" height="1" fill="#00ff00"/><rect x="6" y="7" width="1" height="1" fill="#c0f0c0"/><rect x="7" y="7" width="1" height="1" fill="#00ff00"/><rect x="8" y="7" width="1" height="1" fill="#808080"/><rect x="9" y="7" width="1" height="1" fill="#ffff00"/><rect x="10" y="7" width="1" height="1" fill="#f4f4c0"/><rect x="11" y="7" width="1" height="1" fill="#ffff00"/><rect x="12" y="7" width="1" height="1" fill="#f4f4c0"/><rect x="13" y="7" width="1" height="1" fill="#000"/><rect x="0" y="8" width="1" height="1" fill="#000"/><rect x="1" y="8" width="1" height="1" fill="#c8f4f0"/><rect x="2" y="8" width="1" height="1" fill="#00ffff"/><rect x="3" y="8" width="1" height="1" fill="#c8f4f0"/><rect x="4" y="8" width="1" height="1" fill="#808080"/><rect x="5" y="8" width="1" height="1" fill="#c0f0c0"/><rect x="6" y="8" width="1" height="1" fill="#00ff00"/><rect x="7" y="8" width="1" height="1" fill="#c0f0c0"/><rect x="8" y="8" width="1" height="1" fill="#808080"/><rect x="9" y="8" width="1" height="1" fill="#f4f4c0"/><rect x="10" y="8" width="1" height="1" fill="#ffff00"/><rect x="11" y="8" width="1" height="1" fill="#f4f4c0"/><rect x="12" y="8" width="1" height="1" fill="#ffff00"/><rect x="13" y="8" width="1" height="1" fill="#000"/><rect x="0" y="9" width="1" height="1" fill="#000"/><rect x="1" y="9" width="1" height="1" fill="#00ffff"/><rect x="2" y="9" width="1" height="1" fill="#c8f4f0"/><rect x="3" y="9" width="1" height="1" fill="#00ffff"/><rect x="4" y="9" width="1" height="1" fill="#808080"/><rect x="5" y="9" width="1" height="1" fill="#00ff00"/><rect x="6" y="9" width="1" height="1" fill="#c0f0c0"/><rect x="7" y="9" width="1" height="1" fill="#00ff00"/><rect x="8" y="9" width="1" height="1" fill="#808080"/><rect x="9" y="9" width="1" height="1" fill="#ffff00"/><rect x="10" y="9" width="1" height="1" fill="#f4f4c0"/><rect x="11" y="9" width="1" height="1" fill="#ffff00"/><rect x="12" y="9" width="1" height="1" fill="#f4f4c0"/><rect x="13" y="9" width="1" height="1" fill="#000"/><rect x="0" y="10" width="1" height="1" fill="#000"/><rect x="1" y="10" width="1" height="1" fill="#c8f4f0"/><rect x="2" y="10" width="1" height="1" fill="#00ffff"/><rect x="3" y="10" width="1" height="1" fill="#c8f4f0"/><rect x="4" y="10" width="1" height="1" fill="#808080"/><rect x="5" y="10" width="1" height="1" fill="#c0f0c0"/><rect x="6" y="10" width="1" height="1" fill="#00ff00"/><rect x="7" y="10" width="1" height="1" fill="#c0f0c0"/><rect x="8" y="10" width="1" height="1" fill="#808080"/><rect x="9" y="10" width="1" height="1" fill="#f4f4c0"/><rect x="10" y="10" width="1" height="1" fill="#ffff00"/><rect x="11" y="10" width="1" height="1" fill="#f4f4c0"/><rect x="12" y="10" width="1" height="1" fill="#ffff00"/><rect x="13" y="10" width="1" height="1" fill="#000"/><rect x="0" y="11" width="14" height="1" fill="#000"/></svg>
<svg style="position:absolute;left:19px;top:242px;" width="14" height="12" shape-rendering="crispEdges"><rect x="0" y="0" width="14" height="1" fill="#000"/><rect x="0" y="1" width="1" height="1" fill="#000"/><rect x="1" y="1" width="12" height="1" fill="#1a8a8a"/><rect x="13" y="1" width="1" height="1" fill="#000"/><rect x="0" y="2" width="1" height="1" fill="#000"/><rect x="1" y="2" width="1" height="1" fill="#c8f4f0"/><rect x="2" y="2" width="1" height="1" fill="#00ffff"/><rect x="3" y="2" width="1" height="1" fill="#c8f4f0"/><rect x="4" y="2" width="1" height="1" fill="#808080"/><rect x="5" y="2" width="1" height="1" fill="#c0f0c0"/><rect x="6" y="2" width="1" height="1" fill="#00ff00"/><rect x="7" y="2" width="1" height="1" fill="#c0f0c0"/><rect x="8" y="2" width="1" height="1" fill="#808080"/><rect x="9" y="2" width="1" height="1" fill="#f4f4c0"/><rect x="10" y="2" width="1" height="1" fill="#ffff00"/><rect x="11" y="2" width="1" height="1" fill="#f4f4c0"/><rect x="12" y="2" width="1" height="1" fill="#ffff00"/><rect x="13" y="2" width="1" height="1" fill="#000"/><rect x="0" y="3" width="1" height="1" fill="#000"/><rect x="1" y="3" width="1" height="1" fill="#00ffff"/><rect x="2" y="3" width="1" height="1" fill="#c8f4f0"/><rect x="3" y="3" width="1" height="1" fill="#00ffff"/><rect x="4" y="3" width="1" height="1" fill="#808080"/><rect x="5" y="3" width="1" height="1" fill="#00ff00"/><rect x="6" y="3" width="1" height="1" fill="#c0f0c0"/><rect x="7" y="3" width="1" height="1" fill="#00ff00"/><rect x="8" y="3" width="1" height="1" fill="#808080"/><rect x="9" y="3" width="1" height="1" fill="#ffff00"/><rect x="10" y="3" width="1" height="1" fill="#f4f4c0"/><rect x="11" y="3" width="1" height="1" fill="#ffff00"/><rect x="12" y="3" width="1" height="1" fill="#f4f4c0"/><rect x="13" y="3" width="1" height="1" fill="#000"/><rect x="0" y="4" width="1" height="1" fill="#000"/><rect x="1" y="4" width="1" height="1" fill="#c8f4f0"/><rect x="2" y="4" width="1" height="1" fill="#00ffff"/><rect x="3" y="4" width="1" height="1" fill="#c8f4f0"/><rect x="4" y="4" width="1" height="1" fill="#808080"/><rect x="5" y="4" width="1" height="1" fill="#c0f0c0"/><rect x="6" y="4" width="1" height="1" fill="#00ff00"/><rect x="7" y="4" width="1" height="1" fill="#c0f0c0"/><rect x="8" y="4" width="1" height="1" fill="#808080"/><rect x="9" y="4" width="1" height="1" fill="#f4f4c0"/><rect x="10" y="4" width="1" height="1" fill="#ffff00"/><rect x="11" y="4" width="1" height="1" fill="#f4f4c0"/><rect x="12" y="4" width="1" height="1" fill="#ffff00"/><rect x="13" y="4" width="1" height="1" fill="#000"/><rect x="0" y="5" width="1" height="1" fill="#000"/><rect x="1" y="5" width="1" height="1" fill="#00ffff"/><rect x="2" y="5" width="1" height="1" fill="#c8f4f0"/><rect x="3" y="5" width="1" height="1" fill="#00ffff"/><rect x="4" y="5" width="1" height="1" fill="#808080"/><rect x="5" y="5" width="1" height="1" fill="#00ff00"/><rect x="6" y="5" width="1" height="1" fill="#c0f0c0"/><rect x="7" y="5" width="1" height="1" fill="#00ff00"/><rect x="8" y="5" width="1" height="1" fill="#808080"/><rect x="9" y="5" width="1" height="1" fill="#ffff00"/><rect x="10" y="5" width="1" height="1" fill="#f4f4c0"/><rect x="11" y="5" width="1" height="1" fill="#ffff00"/><rect x="12" y="5" width="1" height="1" fill="#f4f4c0"/><rect x="13" y="5" width="1" height="1" fill="#000"/><rect x="0" y="6" width="1" height="1" fill="#000"/><rect x="1" y="6" width="1" height="1" fill="#c8f4f0"/><rect x="2" y="6" width="1" height="1" fill="#00ffff"/><rect x="3" y="6" width="1" height="1" fill="#c8f4f0"/><rect x="4" y="6" width="1" height="1" fill="#808080"/><rect x="5" y="6" width="1" height="1" fill="#c0f0c0"/><rect x="6" y="6" width="1" height="1" fill="#00ff00"/><rect x="7" y="6" width="1" height="1" fill="#c0f0c0"/><rect x="8" y="6" width="1" height="1" fill="#808080"/><rect x="9" y="6" width="1" height="1" fill="#f4f4c0"/><rect x="10" y="6" width="1" height="1" fill="#ffff00"/><rect x="11" y="6" width="1" height="1" fill="#f4f4c0"/><rect x="12" y="6" width="1" height="1" fill="#ffff00"/><rect x="13" y="6" width="1" height="1" fill="#000"/><rect x="0" y="7" width="1" height="1" fill="#000"/><rect x="1" y="7" width="1" height="1" fill="#00ffff"/><rect x="2" y="7" width="1" height="1" fill="#c8f4f0"/><rect x="3" y="7" width="1" height="1" fill="#00ffff"/><rect x="4" y="7" width="1" height="1" fill="#808080"/><rect x="5" y="7" width="1" height="1" fill="#00ff00"/><rect x="6" y="7" width="1" height="1" fill="#c0f0c0"/><rect x="7" y="7" width="1" height="1" fill="#00ff00"/><rect x="8" y="7" width="1" height="1" fill="#808080"/><rect x="9" y="7" width="1" height="1" fill="#ffff00"/><rect x="10" y="7" width="1" height="1" fill="#f4f4c0"/><rect x="11" y="7" width="1" height="1" fill="#ffff00"/><rect x="12" y="7" width="1" height="1" fill="#f4f4c0"/><rect x="13" y="7" width="1" height="1" fill="#000"/><rect x="0" y="8" width="1" height="1" fill="#000"/><rect x="1" y="8" width="1" height="1" fill="#c8f4f0"/><rect x="2" y="8" width="1" height="1" fill="#00ffff"/><rect x="3" y="8" width="1" height="1" fill="#c8f4f0"/><rect x="4" y="8" width="1" height="1" fill="#808080"/><rect x="5" y="8" width="1" height="1" fill="#c0f0c0"/><rect x="6" y="8" width="1" height="1" fill="#00ff00"/><rect x="7" y="8" width="1" height="1" fill="#c0f0c0"/><rect x="8" y="8" width="1" height="1" fill="#808080"/><rect x="9" y="8" width="1" height="1" fill="#f4f4c0"/><rect x="10" y="8" width="1" height="1" fill="#ffff00"/><rect x="11" y="8" width="1" height="1" fill="#f4f4c0"/><rect x="12" y="8" width="1" height="1" fill="#ffff00"/><rect x="13" y="8" width="1" height="1" fill="#000"/><rect x="0" y="9" width="1" height="1" fill="#000"/><rect x="1" y="9" width="1" height="1" fill="#00ffff"/><rect x="2" y="9" width="1" height="1" fill="#c8f4f0"/><rect x="3" y="9" width="1" height="1" fill="#00ffff"/><rect x="4" y="9" width="1" height="1" fill="#808080"/><rect x="5" y="9" width="1" height="1" fill="#00ff00"/><rect x="6" y="9" width="1" height="1" fill="#c0f0c0"/><rect x="7" y="9" width="1" height="1" fill="#00ff00"/><rect x="8" y="9" width="1" height="1" fill="#808080"/><rect x="9" y="9" width="1" height="1" fill="#ffff00"/><rect x="10" y="9" width="1" height="1" fill="#f4f4c0"/><rect x="11" y="9" width="1" height="1" fill="#ffff00"/><rect x="12" y="9" width="1" height="1" fill="#f4f4c0"/><rect x="13" y="9" width="1" height="1" fill="#000"/><rect x="0" y="10" width="1" height="1" fill="#000"/><rect x="1" y="10" width="1" height="1" fill="#c8f4f0"/><rect x="2" y="10" width="1" height="1" fill="#00ffff"/><rect x="3" y="10" width="1" height="1" fill="#c8f4f0"/><rect x="4" y="10" width="1" height="1" fill="#808080"/><rect x="5" y="10" width="1" height="1" fill="#c0f0c0"/><rect x="6" y="10" width="1" height="1" fill="#00ff00"/><rect x="7" y="10" width="1" height="1" fill="#c0f0c0"/><rect x="8" y="10" width="1" height="1" fill="#808080"/><rect x="9" y="10" width="1" height="1" fill="#f4f4c0"/><rect x="10" y="10" width="1" height="1" fill="#ffff00"/><rect x="11" y="10" width="1" height="1" fill="#f4f4c0"/><rect x="12" y="10" width="1" height="1" fill="#ffff00"/><rect x="13" y="10" width="1" height="1" fill="#000"/><rect x="0" y="11" width="14" height="1" fill="#000"/></svg>
<svg style="position:absolute;left:19px;top:260px;" width="13" height="13" shape-rendering="crispEdges"><rect x="4" y="0" width="5" height="1" fill="#ff0000"/><rect x="2" y="1" width="9" height="1" fill="#ff0000"/><rect x="1" y="2" width="3" height="1" fill="#ff0000"/><rect x="9" y="2" width="3" height="1" fill="#ff0000"/><rect x="1" y="3" width="2" height="1" fill="#ff0000"/><rect x="8" y="3" width="4" height="1" fill="#ff0000"/><rect x="0" y="4" width="2" height="1" fill="#ff0000"/><rect x="7" y="4" width="3" height="1" fill="#ff0000"/><rect x="11" y="4" width="2" height="1" fill="#ff0000"/><rect x="0" y="5" width="2" height="1" fill="#ff0000"/><rect x="6" y="5" width="3" height="1" fill="#ff0000"/><rect x="11" y="5" width="2" height="1" fill="#ff0000"/><rect x="0" y="6" width="2" height="1" fill="#ff0000"/><rect x="5" y="6" width="3" height="1" fill="#ff0000"/><rect x="11" y="6" width="2" height="1" fill="#ff0000"/><rect x="0" y="7" width="2" height="1" fill="#ff0000"/><rect x="4" y="7" width="3" height="1" fill="#ff0000"/><rect x="11" y="7" width="2" height="1" fill="#ff0000"/><rect x="0" y="8" width="2" height="1" fill="#ff0000"/><rect x="3" y="8" width="3" height="1" fill="#ff0000"/><rect x="11" y="8" width="2" height="1" fill="#ff0000"/><rect x="1" y="9" width="4" height="1" fill="#ff0000"/><rect x="10" y="9" width="2" height="1" fill="#ff0000"/><rect x="1" y="10" width="3" height="1" fill="#ff0000"/><rect x="9" y="10" width="3" height="1" fill="#ff0000"/><rect x="2" y="11" width="9" height="1" fill="#ff0000"/><rect x="4" y="12" width="5" height="1" fill="#ff0000"/></svg>
<div style="position:absolute;left:728px;top:68px;width:17px;height:206px;background:linear-gradient(to right,#f3f1ec,#fefefb)"></div>
<div style="position:absolute;left:14px;top:274px;width:714px;height:17px;background:linear-gradient(to bottom,#f3f1ec,#fefefb)"></div>
<div style="position:absolute;left:728px;top:274px;width:17px;height:17px;background:#ece9d8"></div>
<div style="position:absolute;left:728px;top:68px;width:16px;height:16px;border:1px solid #fff;border-radius:2px;background:linear-gradient(135deg,#d8e3fd 0%,#c6d5fd 50%,#b9cbfb 100%);box-shadow:1px 1px 0 #b3c5f0"></div>
<svg style="position:absolute;left:0;top:0" width="758" height="554"><path d="M732.0 78.0 L736.0 74.0 L740.0 78.0" stroke="#4d6185" stroke-width="2.4" fill="none"/></svg>
<div style="position:absolute;left:728px;top:257px;width:16px;height:16px;border:1px solid #fff;border-radius:2px;background:linear-gradient(135deg,#d8e3fd 0%,#c6d5fd 50%,#b9cbfb 100%);box-shadow:1px 1px 0 #b3c5f0"></div>
<svg style="position:absolute;left:0;top:0" width="758" height="554"><path d="M732.0 263.0 L736.0 267.0 L740.0 263.0" stroke="#4d6185" stroke-width="2.4" fill="none"/></svg>
<div style="position:absolute;left:14px;top:274px;width:16px;height:16px;border:1px solid #fff;border-radius:2px;background:linear-gradient(135deg,#d8e3fd 0%,#c6d5fd 50%,#b9cbfb 100%);box-shadow:1px 1px 0 #b3c5f0"></div>
<svg style="position:absolute;left:0;top:0" width="758" height="554"><path d="M24.0 278.0 L20.0 282.0 L24.0 286.0" stroke="#4d6185" stroke-width="2.4" fill="none"/></svg>
<div style="position:absolute;left:711px;top:274px;width:16px;height:16px;border:1px solid #fff;border-radius:2px;background:linear-gradient(135deg,#d8e3fd 0%,#c6d5fd 50%,#b9cbfb 100%);box-shadow:1px 1px 0 #b3c5f0"></div>
<svg style="position:absolute;left:0;top:0" width="758" height="554"><path d="M717.0 278.0 L721.0 282.0 L717.0 286.0" stroke="#4d6185" stroke-width="2.4" fill="none"/></svg>
<div style="position:absolute;left:728px;top:214px;width:16px;height:18px;border:1px solid #fff;border-radius:2px;background:linear-gradient(to right,#cad9fc,#c3d3fc 50%,#b8cbfa);box-shadow:1px 1px 0 #b3c5f0"></div>
<div style="position:absolute;left:733px;top:219px;width:7px;height:2px;background:#eef4fe;border-bottom:1px solid #8ca4e0"></div>
<div style="position:absolute;left:733px;top:221px;width:7px;height:2px;background:#eef4fe;border-bottom:1px solid #8ca4e0"></div>
<div style="position:absolute;left:733px;top:223px;width:7px;height:2px;background:#eef4fe;border-bottom:1px solid #8ca4e0"></div>
<div style="position:absolute;left:733px;top:225px;width:7px;height:2px;background:#eef4fe;border-bottom:1px solid #8ca4e0"></div>
<div style="position:absolute;left:145px;top:274px;width:114px;height:16px;border:1px solid #fff;border-radius:2px;background:linear-gradient(to bottom,#cad9fc,#c3d3fc 50%,#b8cbfa);box-shadow:1px 1px 0 #b3c5f0"></div>
<div style="position:absolute;left:198px;top:278px;width:2px;height:7px;background:#eef4fe;border-right:1px solid #8ca4e0"></div>
<div style="position:absolute;left:200px;top:278px;width:2px;height:7px;background:#eef4fe;border-right:1px solid #8ca4e0"></div>
<div style="position:absolute;left:202px;top:278px;width:2px;height:7px;background:#eef4fe;border-right:1px solid #8ca4e0"></div>
<div style="position:absolute;left:204px;top:278px;width:2px;height:7px;background:#eef4fe;border-right:1px solid #8ca4e0"></div>
<div style="position:absolute;left:316px;top:297px;width:129px;height:16px;border:1px solid #96937f;background:#f1f0ea;box-shadow:inset 1px 1px 0 #fff"></div>
<div style="position:absolute;left:345px;top:300px;width:72px;height:5px;background:repeating-linear-gradient(to right,#000 0px,#000 1px,transparent 1px,transparent 2px)"></div>
<div style="position:absolute;left:345px;top:306px;width:72px;height:5px;background:repeating-linear-gradient(to right,#000 0px,#000 1px,transparent 1px,transparent 2px)"></div>
<div style="position:absolute;left:15.30px;top:324px;line-height:13px;font-size:11.5px;letter-spacing:-0.620px;white-space:nowrap;will-change:transform;;">Type :</div>
<div style="position:absolute;left:47px;top:321px;width:119px;height:23px;border:1px solid #7f9db9;background:#fff"></div>
<div style="position:absolute;left:149px;top:323px;width:16px;height:19px;border:1px solid #fff;border-radius:2px;background:linear-gradient(135deg,#dae5fd 0%,#c3d3fd 50%,#b4c8fb 100%);box-shadow:inset -1px -1px 0 #a8bdf0"></div>
<svg style="position:absolute;left:0;top:0" width="758" height="554"><path d="M153 330 L157 334 L161 330" stroke="#4d6185" stroke-width="2.4" fill="none"/></svg>
<div style="position:absolute;left:52.20px;top:326px;line-height:16px;font-size:13.5px;letter-spacing:-0.200px;white-space:nowrap;will-change:transform;font-family:Liberation Serif;font-style:italic;font-weight:bold;">ab</div>
<div style="position:absolute;left:71.00px;top:328px;line-height:13px;font-size:11.5px;letter-spacing:-0.433px;white-space:nowrap;will-change:transform;;">Text</div>
<div style="position:absolute;left:175.70px;top:324px;line-height:13px;font-size:11.5px;letter-spacing:-0.640px;white-space:nowrap;will-change:transform;;">Name :</div>
<div style="position:absolute;left:216px;top:322px;width:468px;height:18px;background:#fff"></div>
<div style="position:absolute;left:217.70px;top:325px;line-height:13px;font-size:11.5px;letter-spacing:-0.490px;white-space:nowrap;will-change:transform;;">ImmediateParentSubject</div>
<div style="position:absolute;left:690px;top:320px;width:23px;height:21px;border:1px solid #aca899;background:#f4f3ee"></div>
<div style="position:absolute;left:694.00px;top:321px;line-height:17px;font-size:15px;letter-spacing:0.000px;white-space:nowrap;will-change:transform;font-family:Liberation Serif;font-style:italic;font-weight:bold;">@</div>
<div style="position:absolute;left:717px;top:320px;width:23px;height:21px;border:1px solid #aca899;background:#f4f3ee"></div>
<svg style="position:absolute;left:720px;top:322px;" width="16" height="15" shape-rendering="crispEdges"><rect x="7" y="0" width="1" height="1" fill="#8a00aa"/><rect x="8" y="0" width="1" height="1" fill="#000"/><rect x="6" y="1" width="1" height="1" fill="#8a00aa"/><rect x="7" y="1" width="1" height="1" fill="#b0a0d8"/><rect x="8" y="1" width="1" height="1" fill="#8a00aa"/><rect x="9" y="1" width="2" height="1" fill="#000"/><rect x="5" y="2" width="1" height="1" fill="#8a00aa"/><rect x="6" y="2" width="1" height="1" fill="#b0a0d8"/><rect x="7" y="2" width="4" height="1" fill="#8a00aa"/><rect x="11" y="2" width="2" height="1" fill="#000"/><rect x="4" y="3" width="1" height="1" fill="#8a00aa"/><rect x="5" y="3" width="1" height="1" fill="#b0a0d8"/><rect x="6" y="3" width="7" height="1" fill="#8a00aa"/><rect x="13" y="3" width="2" height="1" fill="#000"/><rect x="3" y="4" width="1" height="1" fill="#8a00aa"/><rect x="4" y="4" width="1" height="1" fill="#b0a0d8"/><rect x="5" y="4" width="2" height="1" fill="#8a00aa"/><rect x="7" y="4" width="4" height="1" fill="#ffff00"/><rect x="11" y="4" width="3" height="1" fill="#8a00aa"/><rect x="14" y="4" width="1" height="1" fill="#000"/><rect x="2" y="5" width="1" height="1" fill="#8a00aa"/><rect x="3" y="5" width="1" height="1" fill="#b0a0d8"/><rect x="4" y="5" width="2" height="1" fill="#8a00aa"/><rect x="6" y="5" width="2" height="1" fill="#ffff00"/><rect x="8" y="5" width="1" height="1" fill="#8a00aa"/><rect x="9" y="5" width="2" height="1" fill="#ffff00"/><rect x="11" y="5" width="3" height="1" fill="#8a00aa"/><rect x="14" y="5" width="1" height="1" fill="#000"/><rect x="1" y="6" width="1" height="1" fill="#8a00aa"/><rect x="2" y="6" width="1" height="1" fill="#b0a0d8"/><rect x="3" y="6" width="4" height="1" fill="#8a00aa"/><rect x="7" y="6" width="1" height="1" fill="#f0f0f0"/><rect x="8" y="6" width="2" height="1" fill="#ffff00"/><rect x="10" y="6" width="3" height="1" fill="#8a00aa"/><rect x="13" y="6" width="2" height="1" fill="#000"/><rect x="0" y="7" width="1" height="1" fill="#8a00aa"/><rect x="1" y="7" width="1" height="1" fill="#b0a0d8"/><rect x="2" y="7" width="4" height="1" fill="#8a00aa"/><rect x="6" y="7" width="2" height="1" fill="#ffff00"/><rect x="8" y="7" width="4" height="1" fill="#8a00aa"/><rect x="12" y="7" width="1" height="1" fill="#000"/><rect x="13" y="7" width="1" height="1" fill="#f0f0f0"/><rect x="14" y="7" width="2" height="1" fill="#000"/><rect x="0" y="8" width="1" height="1" fill="#8a00aa"/><rect x="1" y="8" width="1" height="1" fill="#000"/><rect x="2" y="8" width="9" height="1" fill="#8a00aa"/><rect x="11" y="8" width="1" height="1" fill="#000"/><rect x="12" y="8" width="2" height="1" fill="#f0f0f0"/><rect x="14" y="8" width="1" height="1" fill="#000"/><rect x="0" y="9" width="1" height="1" fill="#000"/><rect x="1" y="9" width="2" height="1" fill="#f0f0f0"/><rect x="3" y="9" width="2" height="1" fill="#000"/><rect x="5" y="9" width="5" height="1" fill="#8a00aa"/><rect x="10" y="9" width="1" height="1" fill="#000"/><rect x="11" y="9" width="2" height="1" fill="#f0f0f0"/><rect x="13" y="9" width="1" height="1" fill="#8a00aa"/><rect x="14" y="9" width="1" height="1" fill="#000"/><rect x="0" y="10" width="2" height="1" fill="#000"/><rect x="2" y="10" width="3" height="1" fill="#f0f0f0"/><rect x="5" y="10" width="2" height="1" fill="#000"/><rect x="7" y="10" width="2" height="1" fill="#8a00aa"/><rect x="9" y="10" width="1" height="1" fill="#000"/><rect x="10" y="10" width="2" height="1" fill="#f0f0f0"/><rect x="12" y="10" width="1" height="1" fill="#8a00aa"/><rect x="13" y="10" width="1" height="1" fill="#000"/><rect x="1" y="11" width="2" height="1" fill="#000"/><rect x="3" y="11" width="3" height="1" fill="#f0f0f0"/><rect x="6" y="11" width="3" height="1" fill="#000"/><rect x="9" y="11" width="2" height="1" fill="#f0f0f0"/><rect x="11" y="11" width="1" height="1" fill="#8a00aa"/><rect x="12" y="11" width="1" height="1" fill="#000"/><rect x="3" y="12" width="2" height="1" fill="#000"/><rect x="5" y="12" width="5" height="1" fill="#f0f0f0"/><rect x="10" y="12" width="1" height="1" fill="#8a00aa"/><rect x="11" y="12" width="1" height="1" fill="#000"/><rect x="5" y="13" width="2" height="1" fill="#000"/><rect x="7" y="13" width="1" height="1" fill="#f0f0f0"/><rect x="8" y="13" width="2" height="1" fill="#8a00aa"/><rect x="10" y="13" width="1" height="1" fill="#000"/><rect x="7" y="14" width="2" height="1" fill="#000"/></svg>
<div style="position:absolute;left:15px;top:347px;width:727px;height:101px;border-top:1px solid #9a9786;border-left:1px solid #9a9786;border-right:1px solid #fff;border-bottom:1px solid #fff"><div style="position:absolute;left:0;top:0;right:0;bottom:0;background:#fff;border-top:1px solid #716f64;border-left:1px solid #716f64;border-right:1px solid #f1efe2;border-bottom:1px solid #f1efe2"></div></div>
<div style="position:absolute;left:18.00px;top:351px;line-height:13px;font-size:11.5px;letter-spacing:-0.308px;white-space:nowrap;will-change:transform;;">Data and data</div>
<div style="position:absolute;left:15px;top:451px;width:13px;height:13px;border:1px solid #1c5180;background:linear-gradient(135deg,#dcdcd7 0%,#f0f0ec 60%,#ffffff 100%)"></div>
<svg style="position:absolute;left:18px;top:454px" width="7" height="7" viewBox="0 0 7 7"><path d="M0 2v3l2 2 5-5v-3l-5 5z" fill="#21a121"/></svg>
<div style="position:absolute;left:32.80px;top:452px;line-height:13px;font-size:11.5px;letter-spacing:-0.900px;white-space:nowrap;will-change:transform;;">Summary</div>
<div style="position:absolute;left:93px;top:451px;width:13px;height:13px;border:1px solid #1c5180;background:linear-gradient(135deg,#dcdcd7 0%,#f0f0ec 60%,#ffffff 100%)"></div>
<div style="position:absolute;left:110.50px;top:452px;line-height:13px;font-size:11.5px;letter-spacing:-0.300px;white-space:nowrap;will-change:transform;;">Encrypted</div>
<div style="position:absolute;left:171px;top:451px;width:13px;height:13px;border:1px solid #1c5180;background:linear-gradient(135deg,#dcdcd7 0%,#f0f0ec 60%,#ffffff 100%)"></div>
<div style="position:absolute;left:189.20px;top:452px;line-height:13px;font-size:11.5px;letter-spacing:-0.420px;white-space:nowrap;will-change:transform;;">Signed</div>
<div style="position:absolute;left:236px;top:451px;width:13px;height:13px;border:1px solid #1c5180;background:linear-gradient(135deg,#dcdcd7 0%,#f0f0ec 60%,#ffffff 100%)"></div>
<div style="position:absolute;left:253.90px;top:452px;line-height:13px;font-size:11.5px;letter-spacing:-0.412px;white-space:nowrap;will-change:transform;;">Protected</div>
<div style="position:absolute;left:314px;top:451px;width:13px;height:13px;border:1px solid #cac8bb;background:#fff"></div>
<div style="position:absolute;left:331.40px;top:452px;line-height:13px;font-size:11.5px;letter-spacing:-0.125px;white-space:nowrap;will-change:transform;color:#aca899;">Unchanged</div>
<div style="position:absolute;left:13px;top:474px;width:129px;height:19px;border:1px solid #fff;background:#e4e1d2"></div>
<div style="position:absolute;left:15.00px;top:477px;line-height:13px;font-size:11.5px;letter-spacing:-0.129px;white-space:nowrap;will-change:transform;;">18/01/2005 12:10:07 PM</div>
<div style="position:absolute;left:148px;top:474px;width:67px;height:19px;border:1px solid #fff;background:#e4e1d2"></div>
<div style="position:absolute;left:149.80px;top:477px;line-height:13px;font-size:11.5px;letter-spacing:-0.400px;white-space:nowrap;will-change:transform;;">13 bytes</div>
<div style="position:absolute;left:220px;top:474px;width:25px;height:19px;border:1px solid #fff;background:#e4e1d2"></div>
<div style="position:absolute;left:236.50px;top:477px;line-height:13px;font-size:11.5px;letter-spacing:0.000px;white-space:nowrap;will-change:transform;;">1</div>
<div style="position:absolute;left:251px;top:474px;width:24px;height:19px;border:1px solid #fff;background:#e4e1d2"></div>
<div style="position:absolute;left:267.50px;top:477px;line-height:13px;font-size:11.5px;letter-spacing:0.000px;white-space:nowrap;will-change:transform;;">0</div>
<div style="position:absolute;left:600px;top:473px;width:69px;height:21px;border:1px solid #bcb9a8;background:#f4f3ee"></div>
<div style="position:absolute;left:620.80px;top:477.5px;line-height:13px;font-size:11.5px;letter-spacing:-0.675px;white-space:nowrap;will-change:transform;color:#aca899;">Apply</div>
<div style="position:absolute;left:678px;top:473px;width:69px;height:21px;border:1px solid #bcb9a8;background:#f4f3ee"></div>
<div style="position:absolute;left:695.60px;top:477.5px;line-height:13px;font-size:11.5px;letter-spacing:-0.200px;white-space:nowrap;will-change:transform;color:#aca899;">Cancel</div>
<div style="position:absolute;left:12px;top:502px;width:735px;height:40px;border:1px solid #aeab98;border-radius:4px"></div>
<div style="position:absolute;left:22px;top:511px;width:66px;height:23px;border:1px solid #a29f8d;background:#eeece2"></div>
<div style="position:absolute;left:40.60px;top:517px;line-height:13px;font-size:11.5px;letter-spacing:-0.500px;white-space:nowrap;will-change:transform;;"><u>P</u>rint...</div>
<div style="position:absolute;left:669px;top:511px;width:66px;height:23px;border:1px solid #a29f8d;background:#f6f5f1"></div>
<div style="position:absolute;left:689.50px;top:517px;line-height:13px;font-size:11.5px;letter-spacing:-0.900px;white-space:nowrap;will-change:transform;;"><u>C</u>lose</div>
<div style="position:absolute;left:751px;top:539px;width:2px;height:2px;background:#c9c7ba"></div>
<div style="position:absolute;left:747px;top:543px;width:2px;height:2px;background:#c9c7ba"></div>
<div style="position:absolute;left:751px;top:543px;width:2px;height:2px;background:#c9c7ba"></div>
<div style="position:absolute;left:743px;top:547px;width:2px;height:2px;background:#c9c7ba"></div>
<div style="position:absolute;left:747px;top:547px;width:2px;height:2px;background:#c9c7ba"></div>
<div style="position:absolute;left:751px;top:547px;width:2px;height:2px;background:#c9c7ba"></div>
</body></html>
